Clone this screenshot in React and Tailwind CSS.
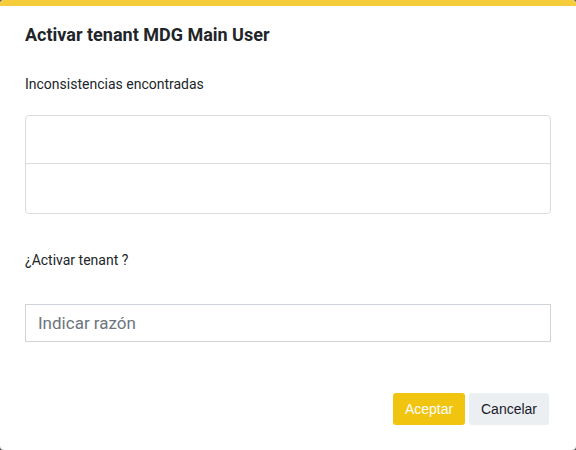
const ConfirmDialog = () => {
  return (
    <div className="w-[576px] h-[450px] bg-[#5a5a5a]">
      <div className="h-full bg-white rounded-[4px] overflow-hidden flex flex-col font-['Roboto',sans-serif]">
        <div className="h-[6px] bg-[#f5cd3a] shrink-0" />
        <div className="px-[25px] flex-1 flex flex-col">
          <h2 className="mt-[17px] text-[18px] leading-[24px] font-bold text-[#212529]">
            Activar tenant MDG Main User
          </h2>

          <p className="mt-[27px] text-[14px] leading-[20px] text-[#212529]">
            Inconsistencias encontradas
          </p>

          {/* empty inconsistency list */}
          <div className="mt-[21px] border border-[#dcdcdc] rounded-[4px]">
            <div className="h-[48px] border-b border-[#dcdcdc]" />
            <div className="h-[49px]" />
          </div>

          <p className="mt-[36px] text-[14px] leading-[20px] text-[#212529]">
            ¿Activar tenant ?
          </p>

          <input
            type="text"
            placeholder="Indicar razón"
            className="mt-[34px] h-[38px] w-full border border-[#ced4da] px-[12px] text-[17px] text-[#495057] placeholder-[#6c757d] outline-none"
          />

          <div className="mt-[51px] flex justify-end gap-[4px] pr-[2px] font-['Liberation_Sans',Arial,sans-serif] text-[14px]">
            <button className="h-[32px] w-[72px] rounded-[3px] bg-[#f1c40f] text-white">
              Aceptar
            </button>
            <button className="h-[32px] w-[80px] rounded-[3px] bg-[#eceff1] text-[#1a1a2e]">
              Cancelar
            </button>
          </div>
        </div>
      </div>
    </div>
  );
};

export default function App() {
  return <ConfirmDialog />;
}
